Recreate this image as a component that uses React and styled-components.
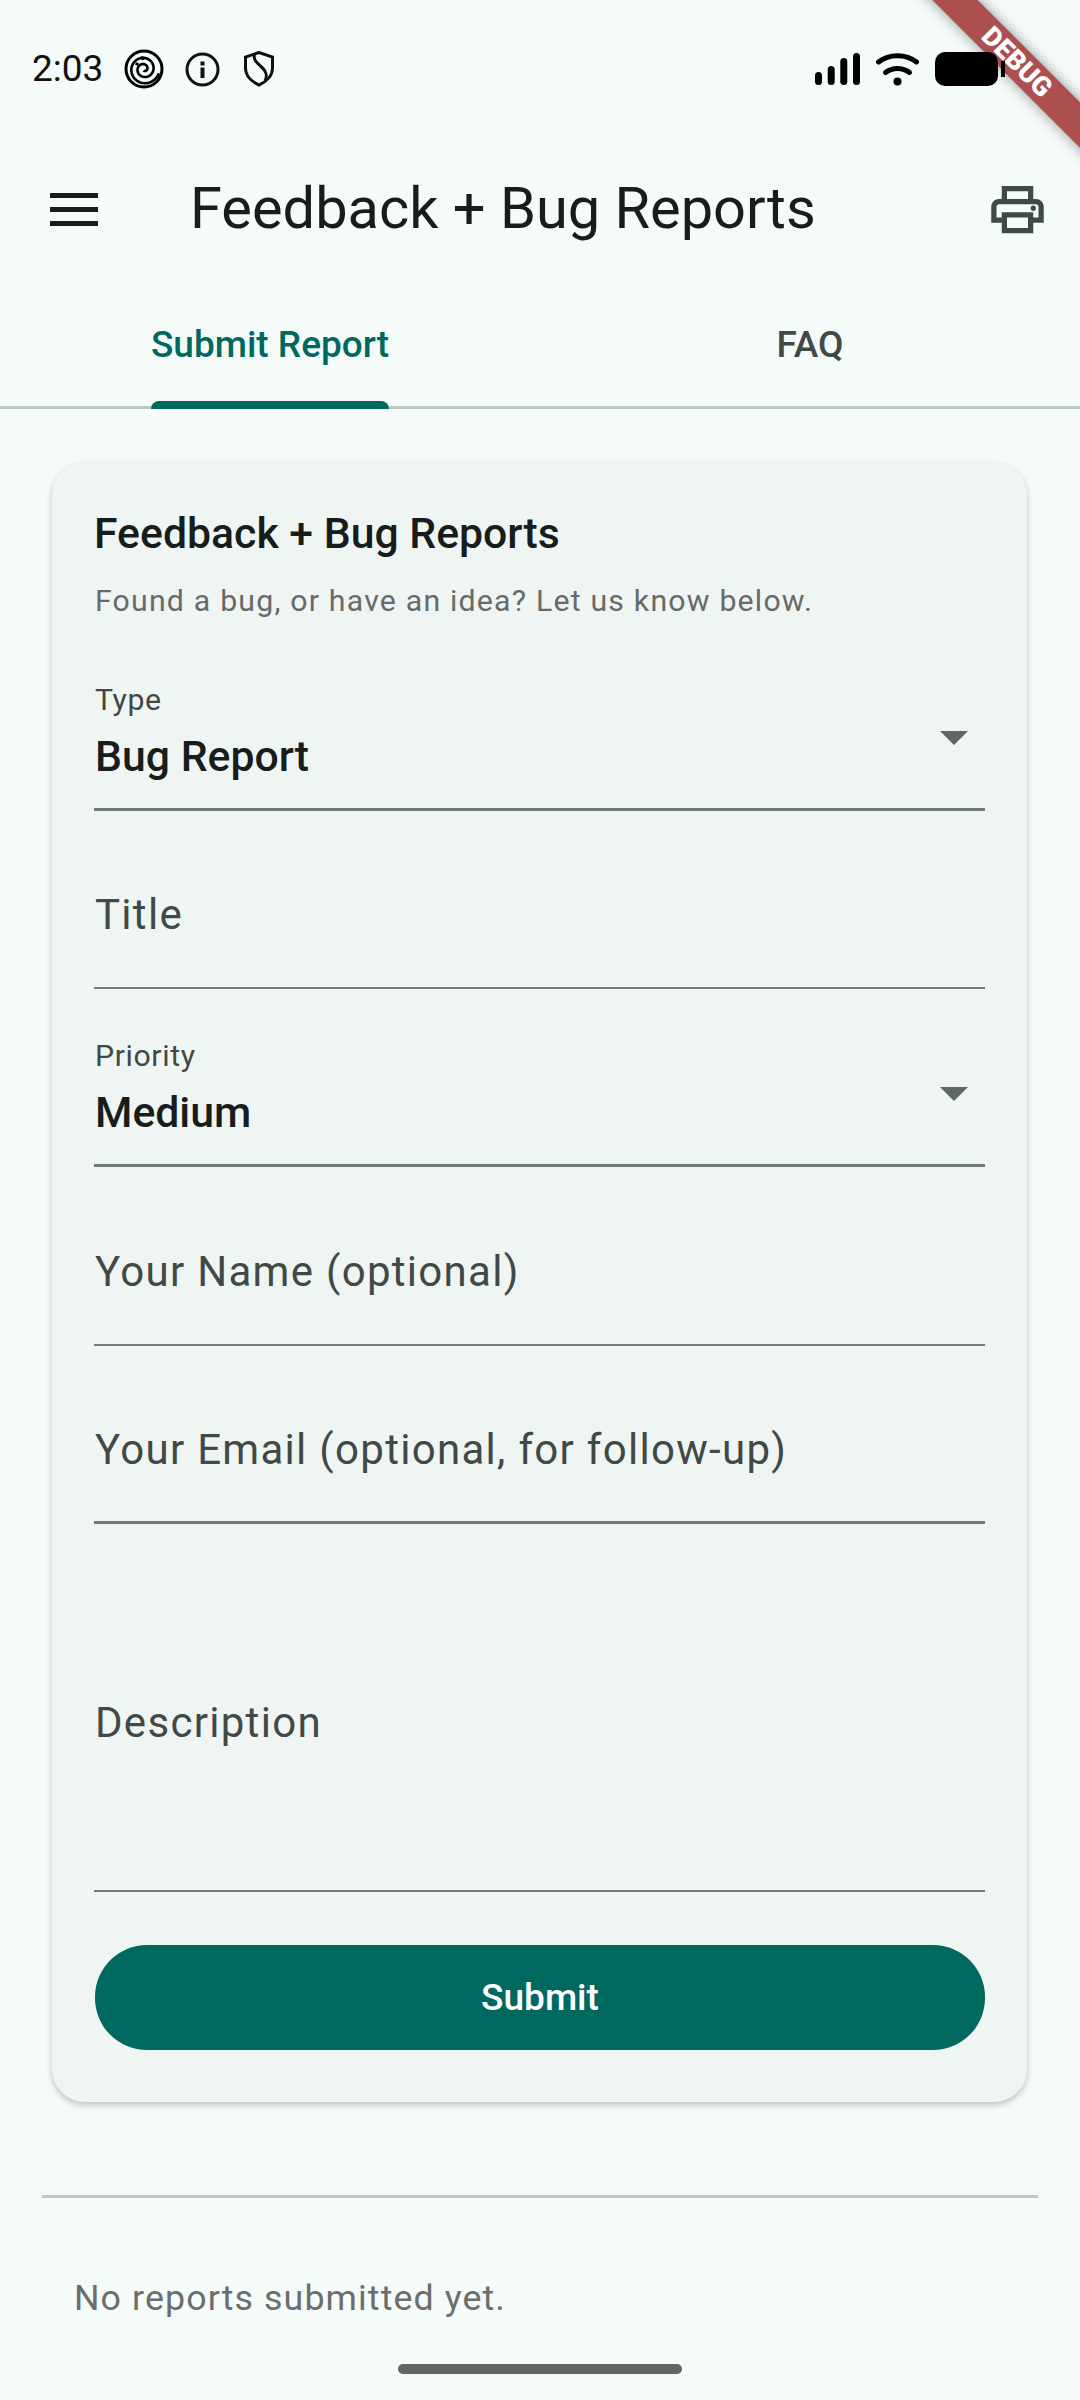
import styled, { createGlobalStyle } from "styled-components";

const GlobalStyle = createGlobalStyle`
  html, body {
    margin: 0;
    padding: 0;
    background: #f5fbf8;
    font-family: "Roboto", sans-serif;
  }
  * { box-sizing: border-box; }
`;

const Screen = styled.div`
  position: relative;
  width: 1080px;
  height: 2400px;
  overflow: hidden;
  background: #f5fbf8;
  color: #171d1b;
`;

const StatusBar = styled.div`
  position: relative;
  z-index: 2;
  height: 132px;
  display: flex;
  align-items: center;
  padding: 6px 75px 0 32px;
`;

const Clock = styled.span`
  width: 92px;
  margin-top: -2px;
  font-size: 37px;
  color: #111;
`;

const StatusIcons = styled.div`
  display: flex;
  align-items: center;
  gap: ${(p) => p.$gap}px;
  margin-left: ${(p) => (p.$right ? "auto" : 0)};
`;

const AppBar = styled.header`
  height: 154px;
  display: flex;
  align-items: center;
  padding: 0 31px 0 50px;
`;

const Title = styled.h1`
  flex: 1;
  margin: 0 0 2px 92px;
  font-size: 57.75px;
  font-weight: 400;
  color: #171d1b;
`;

const Tabs = styled.nav`
  height: 123px;
  display: grid;
  grid-template-columns: 1fr 1fr;
  border-bottom: 3px solid #bec9c5;
`;

const Tab = styled.div`
  display: flex;
  justify-content: center;
`;

const TabLabel = styled.span`
  position: relative;
  height: 123px;
  padding-top: 37px;
  font-size: 37px;
  font-weight: 500;
  color: ${(p) => (p.$active ? "#00695f" : "#3f4946")};

  ${(p) =>
    p.$active &&
    `&::after {
      content: "";
      position: absolute;
      left: 0;
      right: 0;
      bottom: 0;
      height: 8px;
      border-radius: 8px 8px 0 0;
      background: #00695f;
    }`}
`;

const Card = styled.section`
  margin: 53px 53px 0 52px;
  padding: 45px 42px 52px;
  background: #eff5f2;
  border-radius: 33px;
  box-shadow: 0 3px 6px rgba(0, 0, 0, 0.22);
`;

const CardTitle = styled.h2`
  margin: 0;
  font-size: 42.75px;
  line-height: 52px;
  font-weight: 500;
  color: #171d1b;
`;

const CardHint = styled.p`
  margin: 23px 0 59px;
  padding-left: 1px;
  font-size: 30.25px;
  line-height: 38px;
  letter-spacing: 1.2px;
  color: #666b69;
`;

const Field = styled.div`
  position: relative;
  height: ${(p) => p.$height}px;
  padding-left: 1px;
  display: flex;
  flex-direction: column;
  border-bottom: ${(p) => (p.$thick ? 3 : 2)}px solid #717b78;
`;

const SelectField = styled(Field)`
  justify-content: flex-end;
  padding-bottom: 27px;
`;

const InputField = styled(Field)`
  justify-content: center;
  padding-top: 32px;
`;

const SmallLabel = styled.span`
  margin-top: -1px;
  font-size: 30.25px;
  line-height: 36px;
  letter-spacing: 0.6px;
  color: #3f4946;
`;

const Value = styled.span`
  margin-top: 13px;
  font-size: 42.75px;
  line-height: 50px;
  font-weight: 500;
  color: #171d1b;
`;

const Placeholder = styled.span`
  font-size: 42px;
  line-height: 50px;
  letter-spacing: 1.3px;
  color: #3f4946;
`;

const Caret = styled.span`
  position: absolute;
  right: 17px;
  bottom: 63px;
  width: 0;
  height: 0;
  border-left: 14px solid transparent;
  border-right: 14px solid transparent;
  border-top: 14px solid #5f6866;
`;

const SubmitButton = styled.button`
  display: block;
  width: calc(100% - 1px);
  height: 105px;
  margin: 53px 0 0 1px;
  border: none;
  border-radius: 52px;
  background: #00695f;
  color: #fff;
  font-family: inherit;
  font-size: 37px;
  font-weight: 500;
`;

const Divider = styled.hr`
  margin: 93px 42px 0;
  border: none;
  height: 3px;
  background: #bec9c5;
`;

const EmptyNote = styled.p`
  margin: 78px 0 0 74px;
  font-size: 35.75px;
  line-height: 44px;
  letter-spacing: 1.1px;
  color: #6a6f6d;
`;

const HomeBar = styled.div`
  position: absolute;
  left: 398px;
  top: 2364px;
  width: 284px;
  height: 10px;
  border-radius: 5px;
  background: #616664;
`;

const Ribbon = styled.div`
  position: absolute;
  top: 46px;
  left: 847px;
  width: 340px;
  height: 32px;
  transform: rotate(45deg);
  background: #ab4f4f;
  box-shadow: 0 0 14px rgba(0, 0, 0, 0.4);
  color: #fff;
  font-size: 27px;
  font-weight: 900;
  line-height: 32px;
  text-align: center;
`;

// the launcher's swirl: an arc that winds out from the middle and runs into the ring
function spiralPath() {
  const points = [];
  for (let i = 0; i <= 90; i++) {
    const turn = i / 90;
    const angle = ((826 - 810 * turn) * Math.PI) / 180;
    const r = 1.5 + 14 * turn;
    points.push(`${(20 + r * Math.cos(angle)).toFixed(2)} ${(20 + r * Math.sin(angle)).toFixed(2)}`);
  }
  return `M${points.join("L")}`;
}

function SpiralIcon() {
  return (
    <svg width="40" height="40" viewBox="0 0 40 40" fill="none" stroke="#000">
      <circle cx="20" cy="20" r="18" strokeWidth="3" />
      <path d={spiralPath()} strokeWidth="2.6" />
      <path d="M18 7.500 19 11M11.500 14.500l3 1" strokeWidth="2.6" />
    </svg>
  );
}

function InfoIcon() {
  return (
    <svg width="35" height="35" viewBox="0 0 35 35" fill="none">
      <circle cx="17.500" cy="17.500" r="15.500" stroke="#111" strokeWidth="3" />
      <rect x="15.500" y="15.500" width="4" height="10.500" fill="#111" />
      <rect x="15.500" y="9.500" width="4" height="4" fill="#111" />
    </svg>
  );
}

function ShieldIcon() {
  return (
    <svg width="34" height="36" viewBox="-4 0 34 36" fill="none" stroke="#111" strokeWidth="3">
      <path d="M15 1.500 1.500 6v11c0 8 6.500 14 13.500 17 7-3 13.500-9 13.500-17V6L15 1.500Z" transform="translate(-1 0)" />
      <path d="M9.500 3C8 9 12 12 16 15.500 21 20 23 24 20 30" />
    </svg>
  );
}

function SignalIcon() {
  return (
    <svg width="45" height="32" viewBox="0 0 45 32" fill="#000">
      <rect x="0" y="19" width="7" height="13" rx="3.500" />
      <rect x="12.700" y="13" width="7" height="19" rx="3.500" />
      <rect x="25.300" y="5" width="7" height="27" rx="3.500" />
      <rect x="38" y="0" width="7" height="32" rx="3.500" />
    </svg>
  );
}

function WifiIcon() {
  return (
    <svg width="43" height="33" viewBox="0 0 43 33" fill="none" stroke="#000" strokeWidth="5" strokeLinecap="round">
      <path d="M2.500 9C13 .5 30 .5 40.500 9" />
      <path d="M9.500 19.500c7-5.500 17-5.500 24 0" />
      <circle cx="21.500" cy="28.500" r="4" fill="#000" stroke="none" />
    </svg>
  );
}

function BatteryIcon() {
  return (
    <svg width="70" height="34" viewBox="0 0 70 34" fill="#000">
      <rect x="0" y="0" width="63" height="34" rx="10" />
      <rect x="66" y="9" width="4" height="16" />
    </svg>
  );
}

function MenuIcon() {
  return (
    <svg width="48" height="33" viewBox="0 0 48 33" fill="#171d1b">
      <rect x="0" y="0" width="48" height="5" />
      <rect x="0" y="14" width="48" height="5" />
      <rect x="0" y="28" width="48" height="5" />
    </svg>
  );
}

function PrintIcon() {
  return (
    <svg width="63" height="63" viewBox="0 0 24 24" fill="#3f4946">
      <path d="M19 8h-1V3H6v5H5c-1.660 0-3 1.340-3 3v6h4v4h12v-4h4v-6c0-1.660-1.340-3-3-3zM8 5h8v3H8V5zm8 14H8v-4h8v4zm2-4v-2H6v2H4v-4c0-.55.45-1 1-1h14c.55 0 1 .45 1 1v4h-2z" />
      <circle cx="18" cy="11.500" r="1" />
    </svg>
  );
}

export default function App() {
  return (
    <Screen>
      <GlobalStyle />
      <StatusBar>
        <Clock>2:03</Clock>
        <StatusIcons $gap={21}>
          <SpiralIcon />
          <InfoIcon />
          <ShieldIcon />
        </StatusIcons>
        <StatusIcons $right $gap={16}>
          <SignalIcon />
          <WifiIcon />
          <BatteryIcon />
        </StatusIcons>
      </StatusBar>

      <AppBar>
        <MenuIcon />
        <Title>Feedback + Bug Reports</Title>
        <PrintIcon />
      </AppBar>

      <Tabs>
        <Tab>
          <TabLabel $active>Submit Report</TabLabel>
        </Tab>
        <Tab>
          <TabLabel>FAQ</TabLabel>
        </Tab>
      </Tabs>

      <Card>
        <CardTitle>Feedback + Bug Reports</CardTitle>
        <CardHint>Found a bug, or have an idea? Let us know below.</CardHint>

        <SelectField $height={132} $thick>
          <SmallLabel>Type</SmallLabel>
          <Value>Bug Report</Value>
          <Caret />
        </SelectField>
        <InputField $height={178}>
          <Placeholder>Title</Placeholder>
        </InputField>
        <SelectField $height={178} $thick>
          <SmallLabel>Priority</SmallLabel>
          <Value>Medium</Value>
          <Caret />
        </SelectField>
        <InputField $height={179}>
          <Placeholder>Your Name (optional)</Placeholder>
        </InputField>
        <InputField $height={178} $thick>
          <Placeholder>Your Email (optional, for follow-up)</Placeholder>
        </InputField>
        <InputField $height={368}>
          <Placeholder>Description</Placeholder>
        </InputField>

        <SubmitButton>Submit</SubmitButton>
      </Card>

      <Divider />
      <EmptyNote>No reports submitted yet.</EmptyNote>

      <HomeBar />
      <Ribbon>DEBUG</Ribbon>
    </Screen>
  );
}
